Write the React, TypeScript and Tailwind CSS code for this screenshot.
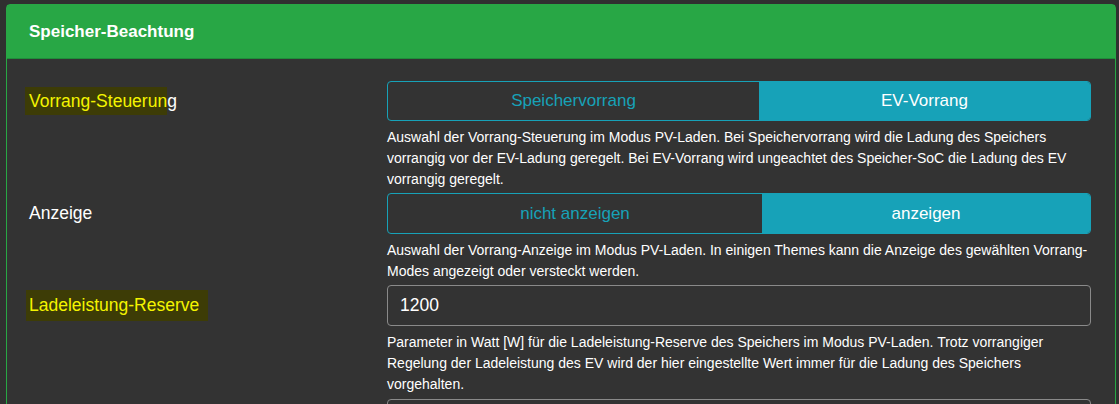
import React from "react";

const font = { fontFamily: '"Liberation Sans", Arial, sans-serif' };

function Help({ children }: { children: React.ReactNode }) {
  return <p className="mt-[6px] text-[14px] leading-[21px] text-white">{children}</p>;
}

function Row({ label, children }: { label: React.ReactNode; children: React.ReactNode }) {
  return (
    <div className="flex">
      <div className="w-[358px] h-[41px] flex items-center text-[17.5px] text-white">{label}</div>
      <div className="w-[704px]">{children}</div>
    </div>
  );
}

export default function App() {
  return (
    <div className="w-[1119px] h-[404px] overflow-hidden bg-[#303030] pt-[4px] pl-[6px]" style={font}>
      <div className="w-[1110px] h-[420px] rounded-t-[4px] border border-[#28a745] bg-[#333333]">
        <div className="h-[54px] bg-[#28a745] border-b border-[#1f8d3a] flex items-center px-[22px] text-[17px] font-bold text-white">
          Speicher-Beachtung
        </div>
        <div className="pt-[22px] pl-[22px] flex flex-col gap-[3px]">
          <Row
            label={
              <span>
                <span className="bg-[#3d3c06] text-[#f4f400] py-[4px] pl-[4px] -ml-[4px]">Vorrang-Steuerun</span>g
              </span>
            }
          >
            <div className="h-[40px] flex rounded-[4px] border border-[#17a2b8] overflow-hidden text-[17px]">
              <div className="w-[371px] flex items-center justify-center text-[#17a2b8]">Speichervorrang</div>
              <div className="flex-1 flex items-center justify-center bg-[#17a2b8] text-white">EV-Vorrang</div>
            </div>
            <Help>
              Auswahl der Vorrang-Steuerung im Modus PV-Laden. Bei Speichervorrang wird die Ladung des Speichers
              vorrangig vor der EV-Ladung geregelt. Bei EV-Vorrang wird ungeachtet des Speicher-SoC die Ladung des EV
              vorrangig geregelt.
            </Help>
          </Row>
          <Row label="Anzeige">
            <div className="h-[41px] flex rounded-[4px] border border-[#17a2b8] overflow-hidden text-[17px]">
              <div className="w-[374px] flex items-center justify-center text-[#17a2b8]">nicht anzeigen</div>
              <div className="flex-1 flex items-center justify-center bg-[#17a2b8] text-white">anzeigen</div>
            </div>
            <Help>
              Auswahl der Vorrang-Anzeige im Modus PV-Laden. In einigen Themes kann die Anzeige des gewählten Vorrang-
              Modes angezeigt oder versteckt werden.
            </Help>
          </Row>
          <Row
            label={
              <span className="bg-[#3d3c06] text-[#f4f400] py-[2px] pl-[3px] pr-[9px] -ml-[3px]">
                Ladeleistung-Reserve
              </span>
            }
          >
            <div className="h-[41px] rounded-[4px] border border-[#8a8a8a] flex items-center px-[12px] text-[17.5px] text-white">
              1200
            </div>
            <Help>
              Parameter in Watt [W] für die Ladeleistung-Reserve des Speichers im Modus PV-Laden. Trotz vorrangiger
              Regelung der Ladeleistung des EV wird der hier eingestellte Wert immer für die Ladung des Speichers
              vorgehalten.
            </Help>
          </Row>
          <Row label="">
            <div className="mt-[1px] h-[41px] rounded-[4px] border border-[#8a8a8a]" />
          </Row>
        </div>
      </div>
    </div>
  );
}
